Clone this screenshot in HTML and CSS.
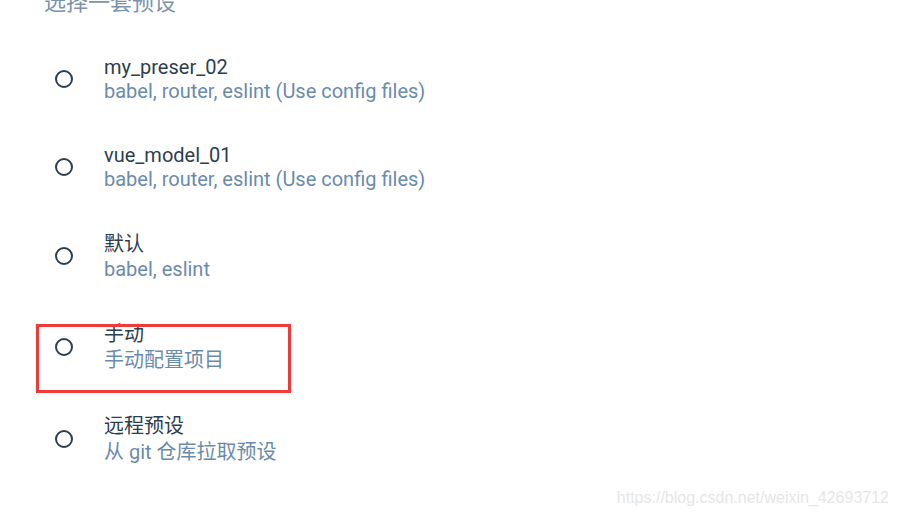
FILE: index.html
```html
<!DOCTYPE html>
<html lang="zh-CN">
<head>
  <meta charset="UTF-8">
  <meta name="viewport" content="width=device-width, initial-scale=1.0">
  <title>选择一套预设</title>
  <link rel="stylesheet" href="styles.css">
</head>
<body>

  <div class="presets">
    <h2 class="presets-title">选择一套预设</h2>

    <div class="preset">
      <span class="radio"></span>
      <div class="info">
        <div class="name">my_preser_02</div>
        <div class="desc">babel, router, eslint (Use config files)</div>
      </div>
    </div>

    <div class="preset">
      <span class="radio"></span>
      <div class="info">
        <div class="name">vue_model_01</div>
        <div class="desc">babel, router, eslint (Use config files)</div>
      </div>
    </div>

    <div class="preset">
      <span class="radio"></span>
      <div class="info">
        <div class="name cjk">默认</div>
        <div class="desc">babel, eslint</div>
      </div>
    </div>

    <div class="preset">
      <span class="radio"></span>
      <div class="info">
        <div class="name cjk">手动</div>
        <div class="desc cjk">手动配置项目</div>
      </div>
      <!-- annotation box from the screenshot -->
      <div class="highlight"></div>
    </div>

    <div class="preset">
      <span class="radio"></span>
      <div class="info">
        <div class="name cjk">远程预设</div>
        <div class="desc cjk">从 git 仓库拉取预设</div>
      </div>
    </div>
  </div>

  <div class="watermark">https://blog.csdn.net/weixin_42693712</div>

</body>
</html>
```

FILE: styles.css
```css
body {
  margin: 0;
  height: 517px;
  overflow: hidden;
  background-color: #fff;
  font-family: Roboto, "Noto Sans CJK SC", sans-serif;
  position: relative;
}

.presets {
  padding-left: 44px;
}

.presets-title {
  margin: -12px 0 17px;
  font-size: 22px;
  font-weight: 400;
  line-height: 30px;
  color: #7b93ad;
}

.preset {
  position: relative;
  display: flex;
  align-items: center;
  padding: 20px 0 20px 11px;
}

.radio {
  width: 14px;
  height: 14px;
  border: 2px solid #2c3e50;
  border-radius: 50%;
  flex-shrink: 0;
}

.info {
  margin-left: 31px;
  font-size: 20px;
  line-height: 24px;
}

.name {
  color: #2c3e50;
}

.desc {
  color: #6a8bad;
}

.cjk {
  line-height: 26px;
}

.highlight {
  position: absolute;
  left: -8px;
  top: 23px;
  width: 249px;
  height: 63px;
  border: 3px solid #f03a3a;
}

.watermark {
  position: absolute;
  right: 10px;
  bottom: 10px;
  font-family: "Liberation Sans", Arial, sans-serif;
  font-size: 16px;
  color: #e6e6e6;
}
```
